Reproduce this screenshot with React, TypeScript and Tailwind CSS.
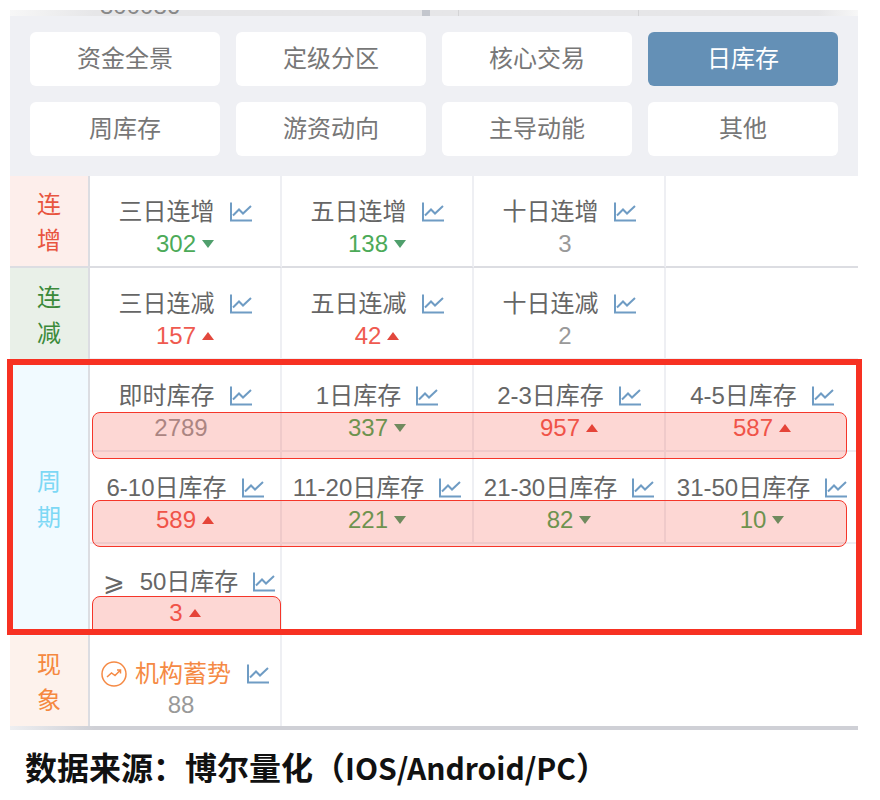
import React from 'react';

const cjk = { fontFamily: '"Liberation Sans", "Noto Sans CJK SC", sans-serif' };

const tabs = ['资金全景', '定级分区', '核心交易', '日库存', '周库存', '游资动向', '主导动能', '其他'];

type Stat = { label: string; value?: string; trend?: 'up' | 'down' };

const ChartIcon = () => (
  <svg width="22" height="20" viewBox="0 0 22 20" fill="none" stroke="#6f9cc4" strokeWidth="2" className="shrink-0">
    <path d="M1 0.5V18.5H22" />
    <path d="M3 13.5L9 7.5L13 11.5L21 4" />
  </svg>
);

const Trend = ({ dir }: { dir: 'up' | 'down' }) =>
  dir === 'up' ? (
    <svg width="12" height="8" viewBox="0 0 12 8" className="shrink-0"><path d="M6 0L12 8H0Z" fill="#e2483d" /></svg>
  ) : (
    <svg width="12" height="8" viewBox="0 0 12 8" className="shrink-0"><path d="M0 0H12L6 8Z" fill="#4f9f6c" /></svg>
  );

const Cell = ({ stat, last, dark }: { stat?: Stat; last?: boolean; dark?: boolean }) => {
  const edge = `border-b-2 ${dark ? 'border-b-[#dcdde2]' : 'border-b-[#eeeff3]'} border-r-[#eeeff3] ${last ? '' : 'border-r-2'}`;
  if (!stat) return <div className={`h-[92px] ${edge}`} />;
  const color = stat.trend === 'up' ? 'text-[#ef5a50]' : stat.trend === 'down' ? 'text-[#4caa58]' : 'text-[#999999]';
  return (
    <div className={`h-[92px] pt-[20px] ${edge}`}>
      <div className="flex items-center justify-center gap-[15px] h-[32px] text-[#666666] whitespace-nowrap">
        <span>{stat.label}</span>
        <ChartIcon />
      </div>
      <div className={`flex items-center justify-center gap-[6px] h-[32px] ${color} ${stat.trend ? '' : 'pr-2'}`}>
        <span>{stat.value}</span>
        {stat.trend && <Trend dir={stat.trend} />}
      </div>
    </div>
  );
};

const Side = ({ chars, className }: { chars: string; className: string }) => (
  <div className={`w-[80px] shrink-0 border-r-2 border-r-[#dcdde2] flex flex-col items-center justify-center pt-[4px] leading-[36px] ${className}`}>
    <span>{chars[0]}</span>
    <span>{chars[1]}</span>
  </div>
);

const row1: Stat[] = [
  { label: '三日连增', value: '302', trend: 'down' },
  { label: '五日连增', value: '138', trend: 'down' },
  { label: '十日连增', value: '3' },
];
const row2: Stat[] = [
  { label: '三日连减', value: '157', trend: 'up' },
  { label: '五日连减', value: '42', trend: 'up' },
  { label: '十日连减', value: '2' },
];
const cycle: Stat[] = [
  { label: '即时库存', value: '2789' },
  { label: '1日库存', value: '337', trend: 'down' },
  { label: '2-3日库存', value: '957', trend: 'up' },
  { label: '4-5日库存', value: '587', trend: 'up' },
  { label: '6-10日库存', value: '589', trend: 'up' },
  { label: '11-20日库存', value: '221', trend: 'down' },
  { label: '21-30日库存', value: '82', trend: 'down' },
  { label: '31-50日库存', value: '10', trend: 'down' },
];

const Grid = ({ children }: { children: React.ReactNode }) => (
  <div className="grid grid-cols-[192px_192px_192px_192px] flex-1">{children}</div>
);

export default function App() {
  return (
    <div className="relative w-[880px] h-[800px] bg-white overflow-hidden pt-[10px] pl-[10px] text-[24px]" style={cjk}>
      <div className="w-[848px]">
        {/* cut off row of the list behind the tab panel */}
        <div className="relative h-[6px] overflow-hidden bg-gradient-to-r from-[#f7f7f7] via-[#e6e6e8] via-10% to-[#e6e6e8]">
          <div className="absolute left-[90px] -top-[20px] text-[#888888] leading-[32px]">300086</div>
          <div className="absolute left-[412px] top-0 w-[8px] h-[6px] bg-[#c3c6cd]" />
          <div className="absolute left-[448px] top-0 w-px h-[6px] bg-[#d4d4d6]" />
          <div className="absolute left-[628px] top-0 w-px h-[6px] bg-[#d4d4d6]" />
          <div className="absolute left-[808px] top-0 w-[40px] h-[6px] bg-gradient-to-r from-[#e6e6e8] to-[#f7f7f7]" />
        </div>

        <div className="bg-[#eff0f4] px-[20px] pt-[16px] pb-[20px] grid grid-cols-4 gap-[16px]">
          {tabs.map(t => (
            <div
              key={t}
              className={`h-[54px] rounded-[6px] flex items-center justify-center ${t === '日库存' ? 'bg-[#6490b6] text-white' : 'bg-white text-[#777777]'}`}
            >
              {t}
            </div>
          ))}
        </div>

        <div className="flex h-[92px]">
          <Side chars="连增" className="bg-[#fdeeeb] text-[#e8553f] border-b-2 border-b-[#dcdde2]" />
          <Grid>
            {row1.map(s => <Cell key={s.label} stat={s} dark />)}
            <Cell last dark />
          </Grid>
        </div>

        <div className="flex h-[92px]">
          <Side chars="连减" className="bg-[#e9f0e8] text-[#3b8a3a]" />
          <Grid>
            {row2.map(s => <Cell key={s.label} stat={s} />)}
            <Cell last />
          </Grid>
        </div>

        <div className="flex h-[276px]">
          <Side chars="周期" className="bg-[#f1faff] text-[#7dd8f5]" />
          <Grid>
            {cycle.map((s, i) => <Cell key={s.label} stat={s} last={i % 4 === 3} />)}
            <div className="h-[92px] pt-[22px] border-r-2 border-[#eeeff3]">
              <div className="flex items-center justify-center h-[32px] text-[#666666] whitespace-nowrap pl-[8px]">
                <span className="mr-[15px] text-[26px]">⩾</span>
                <span>50日库存</span>
                <span className="ml-[15px]"><ChartIcon /></span>
              </div>
              <div className="flex items-center justify-center gap-[6px] h-[30px] text-[#ef5a50]">
                <span>3</span>
                <Trend dir="up" />
              </div>
            </div>
          </Grid>
        </div>

        <div className="flex h-[90px]">
          <Side chars="现象" className="bg-[#fdf2ec] text-[#f5883f]" />
          <Grid>
            <div className="pt-[22px] border-r-2 border-[#eeeff3]">
              <div className="flex items-center justify-center h-[32px] whitespace-nowrap">
                <svg width="26" height="26" viewBox="0 0 26 26" fill="none" stroke="#f58a45" strokeWidth="1.5" className="shrink-0 mr-[8px]">
                  <circle cx="13" cy="13" r="12" />
                  <path d="M6 16L10.5 12L14 14.5L19.5 9M16 9H19.5V12.5" />
                </svg>
                <span className="text-[#f58a45] mr-[16px]">机构蓄势</span>
                <ChartIcon />
              </div>
              <div className="flex items-center justify-center h-[30px] text-[#999999] pr-2">88</div>
            </div>
          </Grid>
        </div>
        <div className="h-[4px] bg-gradient-to-r from-[#eeeff1] via-[#cfd0d6] via-10% to-[#cfd0d6]" />

        <div
          className="mt-[14px] ml-[15px] text-[32px] leading-[44px] font-bold text-[#111111] whitespace-nowrap"
          style={{ fontFamily: '"Noto Sans CJK SC", sans-serif' }}
        >
          数据来源：博尔量化（<span className="text-[30px]">IOS/Android/PC</span>）
        </div>
      </div>

      {/* red markup drawn over the screenshot */}
      <div className="absolute left-[92px] top-[412px] w-[755px] h-[47px] rounded-[8px] border border-[#f5362a] bg-[#f5362a]/20" />
      <div className="absolute left-[92px] top-[500px] w-[755px] h-[47px] rounded-[8px] border border-[#f5362a] bg-[#f5362a]/20" />
      <div className="absolute left-[92px] top-[596px] w-[189px] h-[36px] rounded-t-[8px] border border-[#f5362a] bg-[#f5362a]/20" />
      <div className="absolute left-[7px] top-[359px] w-[855px] h-[276px] border-[6px] border-[#f73122]" />
    </div>
  );
}
